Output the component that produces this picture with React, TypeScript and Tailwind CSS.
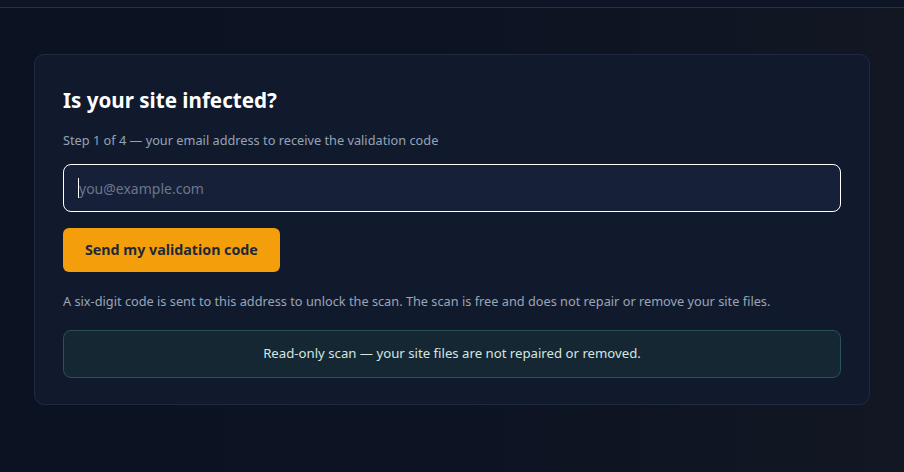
import React from 'react';

const font = { fontFamily: '"Noto Sans", "Open Sans", Arial, sans-serif' };

export default function App() {
  return (
    <div
      className="min-h-[472px] w-full bg-gradient-to-r from-[#0b1221] via-[#0c1322] to-[#121722] text-slate-200"
      style={font}
    >
      <div className="h-[8px] border-b border-[#27324a] bg-[#0d1526]" />

      <div className="px-[34px] pt-[46px]">
        <div className="rounded-[10px] border border-[#1f2a40] bg-[#111a2d] px-[28px] pt-[30px] pb-[26px]">
          <h1 className="text-[20.6px] font-bold leading-[30px] text-white">Is your site infected?</h1>
          <p className="mt-[16px] text-[12.75px] leading-[18px] text-[#94a3b8]">
            Step 1 of 4 — your email address to receive the validation code
          </p>

          <div className="mt-[15px] flex h-[48px] items-center rounded-[8px] border border-white bg-[#172039] px-[14px]">
            <span className="h-[20px] w-px bg-white" />
            <span className="text-[14px] text-[#6b7689]">you@example.com</span>
          </div>

          <button className="mt-[16px] h-[44px] rounded-[6px] bg-[#f59e0b] px-[22px] text-[14.25px] font-bold text-[#1f2937]">
            Send my validation code
          </button>

          <p className="mt-[20px] text-[12.75px] leading-[18px] text-[#9aa5b8]">
            A six-digit code is sent to this address to unlock the scan. The scan is free and does not repair or remove
            your site files.
          </p>

          <div className="mt-[20px] flex h-[48px] items-center justify-center rounded-[8px] border border-[#2a5257] bg-[#152733] text-[13.2px] text-[#d3e6e0]">
            Read-only scan — your site files are not repaired or removed.
          </div>
        </div>
      </div>
    </div>
  );
}
